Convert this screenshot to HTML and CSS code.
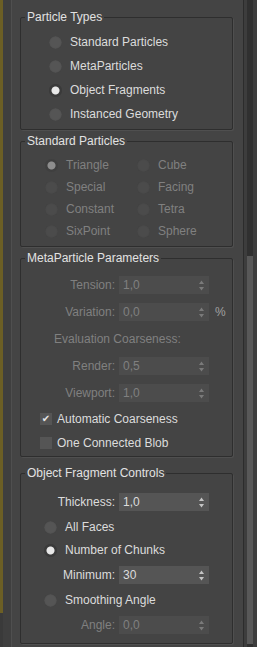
FILE: index.html
```html
<!DOCTYPE html>
<html lang="en">
<head>
    <meta charset="UTF-8">
    <title>Particle Type</title>
    <link rel="stylesheet" href="styles.css">
</head>
<body>
    <div class="window">
        <div class="accent"></div>
        <div class="gutter"></div>
        <div class="panel">
            <fieldset class="group types">
                <legend>Particle Types</legend>
                <div class="opt"><span class="radio"></span>Standard Particles</div>
                <div class="opt"><span class="radio"></span>MetaParticles</div>
                <div class="opt"><span class="radio on"></span>Object Fragments</div>
                <div class="opt"><span class="radio"></span>Instanced Geometry</div>
            </fieldset>

            <fieldset class="group standard off">
                <legend>Standard Particles</legend>
                <div class="grid">
                    <div class="opt"><span class="radio on"></span>Triangle</div>
                    <div class="opt"><span class="radio"></span>Cube</div>
                    <div class="opt"><span class="radio"></span>Special</div>
                    <div class="opt"><span class="radio"></span>Facing</div>
                    <div class="opt"><span class="radio"></span>Constant</div>
                    <div class="opt"><span class="radio"></span>Tetra</div>
                    <div class="opt"><span class="radio"></span>SixPoint</div>
                    <div class="opt"><span class="radio"></span>Sphere</div>
                </div>
            </fieldset>

            <fieldset class="group meta">
                <legend>MetaParticle Parameters</legend>
                <div class="field off">
                    <span class="lbl">Tension:</span>
                    <div class="spin"><span>1,0</span><svg class="arrows" width="5" height="11" viewBox="0 0 5 11"><polygon points="0,4 2.5,0.5 5,4"/><polygon points="0,7 5,7 2.5,10.5"/></svg></div>
                </div>
                <div class="field off">
                    <span class="lbl">Variation:</span>
                    <div class="spin"><span>0,0</span><svg class="arrows" width="5" height="11" viewBox="0 0 5 11"><polygon points="0,4 2.5,0.5 5,4"/><polygon points="0,7 5,7 2.5,10.5"/></svg></div>
                    <span class="unit">%</span>
                </div>
                <div class="caption off">Evaluation Coarseness:</div>
                <div class="field off">
                    <span class="lbl">Render:</span>
                    <div class="spin"><span>0,5</span><svg class="arrows" width="5" height="11" viewBox="0 0 5 11"><polygon points="0,4 2.5,0.5 5,4"/><polygon points="0,7 5,7 2.5,10.5"/></svg></div>
                </div>
                <div class="field off">
                    <span class="lbl">Viewport:</span>
                    <div class="spin"><span>1,0</span><svg class="arrows" width="5" height="11" viewBox="0 0 5 11"><polygon points="0,4 2.5,0.5 5,4"/><polygon points="0,7 5,7 2.5,10.5"/></svg></div>
                </div>
                <div class="check"><span class="box">&#10004;</span>Automatic Coarseness</div>
                <div class="check"><span class="box"></span>One Connected Blob</div>
            </fieldset>

            <fieldset class="group fragments">
                <legend>Object Fragment Controls</legend>
                <div class="field">
                    <span class="lbl">Thickness:</span>
                    <div class="spin"><span>1,0</span><svg class="arrows" width="5" height="11" viewBox="0 0 5 11"><polygon points="0,4 2.5,0.5 5,4"/><polygon points="0,7 5,7 2.5,10.5"/></svg></div>
                </div>
                <div class="opt"><span class="radio"></span>All Faces</div>
                <div class="opt"><span class="radio on"></span>Number of Chunks</div>
                <div class="field">
                    <span class="lbl">Minimum:</span>
                    <div class="spin"><span>30</span><svg class="arrows" width="5" height="11" viewBox="0 0 5 11"><polygon points="0,4 2.5,0.5 5,4"/><polygon points="0,7 5,7 2.5,10.5"/></svg></div>
                </div>
                <div class="opt"><span class="radio"></span>Smoothing Angle</div>
                <div class="field off">
                    <span class="lbl">Angle:</span>
                    <div class="spin"><span>0,0</span><svg class="arrows" width="5" height="11" viewBox="0 0 5 11"><polygon points="0,4 2.5,0.5 5,4"/><polygon points="0,7 5,7 2.5,10.5"/></svg></div>
                </div>
            </fieldset>
        </div>
        <div class="scroll">
            <div class="track"><div class="thumb"></div></div>
        </div>
    </div>
</body>
</html>
```

FILE: styles.css
```css
body {
    margin: 0;
    background-color: #3a3a3a;
    font-family: "Liberation Sans", Arial, sans-serif;
    font-size: 12px;
    color: #dcdcdc;
}
.window {
    display: flex;
    height: 647px;
    overflow: hidden;
}
.accent {
    width: 3px;
    height: 613px;
    background-color: #6c5f25;
}
.gutter {
    width: 8px;
    background-color: #3f3f3f;
    border-right: 1px solid #4f4f4f;
}
.panel {
    width: 213px;
    padding: 10px 10px 0 8px;
    background-color: #444;
    border-right: 1px solid #2c2c2c;
}
.scroll {
    width: 13px;
    display: flex;
    padding: 0 4px 0 3px;
    box-sizing: border-box;
    background-color: #3d3d3d;
}
.track {
    flex: 1;
    padding-top: 256px;
    background-color: #303030;
}
.thumb {
    height: 388px;
    background-color: #585858;
}

/* group boxes */
.group {
    margin: 0 0 4px;
    padding: 0;
    min-inline-size: 0;
    border: 1px solid #2e2e2e;
    border-radius: 2px;
    box-shadow: 1px 1px 0 #4f4f4f;
}
.group legend {
    margin-left: 4px;
    padding: 0 2px;
    line-height: 14px;
    color: #e2e2e2;
}
.types {
    padding: 6px 0 3px;
}
.types .opt {
    padding-left: 28px;
}
.standard {
    padding: 6px 0 4px;
}
.meta {
    padding: 8px 0 3px;
    display: flex;
    flex-direction: column;
    gap: 3px;
}
.fragments {
    margin-top: 9px;
    padding: 10px 0 6px 0;
    display: flex;
    flex-direction: column;
    gap: 3px;
}
.fragments .opt {
    height: 20px;
    padding-left: 23px;
}

/* radio buttons */
.opt {
    display: flex;
    align-items: center;
    gap: 8px;
    height: 24px;
    white-space: nowrap;
}
.radio {
    width: 13px;
    height: 13px;
    flex: none;
    border-radius: 50%;
    background-color: #555;
    box-shadow: inset 0 0 1px #363636;
}
.radio.on {
    background: radial-gradient(circle, #e8e8e8 0 3.5px, #3b3b3b 4.5px);
}
.grid {
    display: grid;
    grid-template-columns: 92px 1fr;
    padding-left: 24px;
}
.grid .opt {
    height: 22px;
}
.off {
    color: #808080;
}
.off .radio {
    background-color: #4b4b4b;
    box-shadow: inset 0 0 1px #3e3e3e;
}
.off .radio.on {
    background: radial-gradient(circle, #8e8e8e 0 3.5px, #404040 4.5px);
}

/* spinners */
.field {
    display: flex;
    align-items: center;
    height: 24px;
}
.lbl {
    width: 94px;
    margin-right: 4px;
    text-align: right;
}
.spin {
    width: 90px;
    height: 18px;
    display: flex;
    align-items: center;
    justify-content: space-between;
    padding: 0 5px 0 4px;
    box-sizing: border-box;
    background-color: #555;
}
.arrows {
    fill: #c4c4c4;
}
.off .spin {
    background-color: #4c4c4c;
}
.off .arrows {
    fill: #7a7a7a;
}
.unit {
    margin-left: 6px;
    color: #a0a0a0;
}
.caption {
    height: 24px;
    line-height: 24px;
    padding-left: 33px;
}

/* checkboxes */
.check {
    display: flex;
    align-items: center;
    gap: 5px;
    height: 21px;
    padding-left: 19px;
}
.box {
    width: 12px;
    height: 12px;
    flex: none;
    background-color: #555;
    color: #e6e6e6;
    font-family: "DejaVu Sans", sans-serif;
    font-size: 10px;
    line-height: 12px;
    text-align: center;
}
```
